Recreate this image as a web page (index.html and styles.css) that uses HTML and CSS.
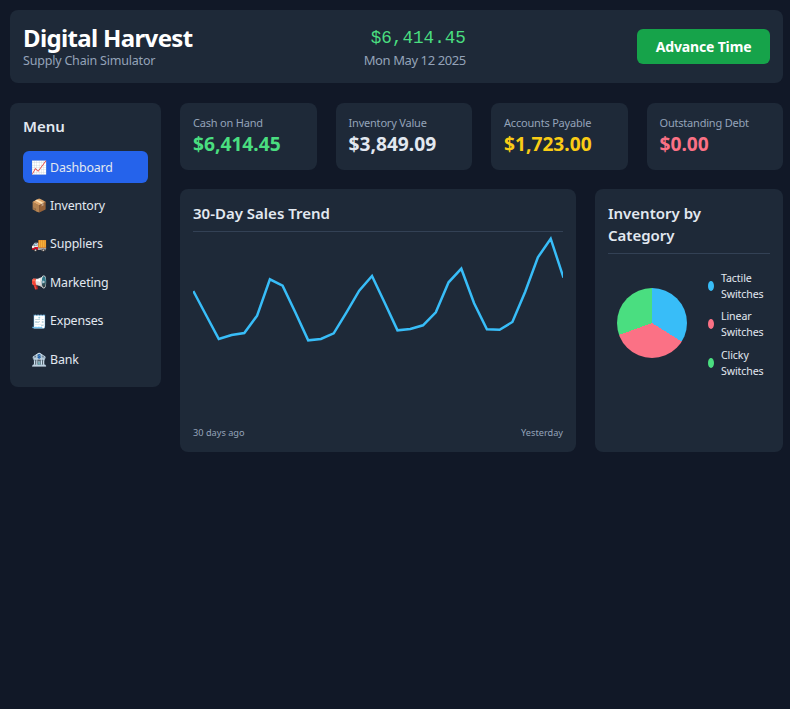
FILE: index.html
```html
<!DOCTYPE html>
<html lang="en">
<head>
  <meta charset="UTF-8" />
  <title>Digital Harvest</title>
  <link rel="stylesheet" href="styles.css">
</head>
<body>

<header class="topbar">
  <div class="brand">
    <h1>Digital Harvest</h1>
    <p>Supply Chain Simulator</p>
  </div>
  <div class="clock">
    <div class="clock-cash">$6,414.45</div>
    <div class="clock-date">Mon May 12 2025</div>
  </div>
  <button class="advance">Advance Time</button>
</header>

<div class="layout">
  <nav class="menu">
    <h2>Menu</h2>
    <a class="menu-item active" href="#"><span class="ico">📈</span>Dashboard</a>
    <a class="menu-item" href="#"><span class="ico">📦</span>Inventory</a>
    <a class="menu-item" href="#"><span class="ico">🚚</span>Suppliers</a>
    <a class="menu-item" href="#"><span class="ico">📢</span>Marketing</a>
    <a class="menu-item" href="#"><span class="ico">🧾</span>Expenses</a>
    <a class="menu-item" href="#"><span class="ico">🏦</span>Bank</a>
  </nav>

  <main class="content">
    <section class="stats">
      <div class="stat">
        <div class="stat-label">Cash on Hand</div>
        <div class="stat-value green">$6,414.45</div>
      </div>
      <div class="stat">
        <div class="stat-label">Inventory Value</div>
        <div class="stat-value">$3,849.09</div>
      </div>
      <div class="stat">
        <div class="stat-label">Accounts Payable</div>
        <div class="stat-value yellow">$1,723.00</div>
      </div>
      <div class="stat">
        <div class="stat-label">Outstanding Debt</div>
        <div class="stat-value red">$0.00</div>
      </div>
    </section>

    <section class="charts">
      <div class="panel">
        <h3>30-Day Sales Trend</h3>
        <svg class="trend" viewBox="193 232 370 196">
          <polyline points="193.3,291 206,315 218.8,339 231.6,335 244.3,333 257.1,315.7 269.9,279.3 282.6,285.7 295.4,312.5 308.2,340.3 320.9,339 333.7,333.3 346.5,312.3 359.2,290.7 372,276 384.8,303 397.5,330.3 410.3,329 423,325.3 435.8,312.3 448.6,282.3 461.3,268.7 474.1,303.3 486.9,329.3 499.6,329.7 512.4,322 525.2,291.7 537.9,257.3 550.7,238.7 563.5,277.7" />
        </svg>
        <div class="trend-axis">
          <span>30 days ago</span>
          <span>Yesterday</span>
        </div>
      </div>

      <div class="panel">
        <h3>Inventory by Category</h3>
        <div class="pie-row">
          <div class="pie"></div>
          <ul class="legend">
            <li><span class="dot blue"></span>Tactile Switches</li>
            <li><span class="dot pink"></span>Linear Switches</li>
            <li><span class="dot lime"></span>Clicky Switches</li>
          </ul>
        </div>
      </div>
    </section>
  </main>
</div>

</body>
</html>
```

FILE: styles.css
```css
html, body {
  margin: 0;
  padding: 0;
  height: 100%;
}

body {
  background: #111827;
  color: #e2e8f0;
  font-family: "Noto Sans", sans-serif;
  padding: 10px 7px 0 10px;
  box-sizing: border-box;
}

.topbar {
  display: flex;
  justify-content: space-between;
  align-items: center;
  height: 73px;
  padding: 0 13px;
  box-sizing: border-box;
  background: #1e2938;
  border-radius: 8px;
}

.brand h1 {
  margin: 0;
  font-size: 24px;
  line-height: 28px;
  font-weight: 700;
  letter-spacing: -0.65px;
  color: #fff;
}

.brand p {
  margin: 1px 0 0;
  font-size: 12.5px;
  line-height: 16px;
  letter-spacing: -0.2px;
  color: #94a3b8;
}

.clock {
  padding-top: 2px;
  text-align: right;
}

.clock-cash {
  font-family: "Liberation Mono", monospace;
  font-size: 17.6px;
  line-height: 24px;
  color: #4ade80;
}

.clock-date {
  font-size: 13px;
  line-height: 20px;
  letter-spacing: -0.4px;
  color: #94a3b8;
}

.advance {
  width: 133px;
  height: 35px;
  border: 0;
  border-radius: 6px;
  background: #16a34a;
  color: #fff;
  font-family: inherit;
  font-size: 14px;
  font-weight: 700;
  letter-spacing: -0.15px;
}

.layout {
  display: flex;
  align-items: flex-start;
  gap: 19px;
  margin-top: 20px;
}

.menu {
  width: 151px;
  flex: none;
  box-sizing: border-box;
  padding: 13px 13px 11.8px;
  background: #1e2938;
  border-radius: 8px;
}

.menu h2 {
  margin: 0 0 14.1px;
  font-size: 15px;
  line-height: 21px;
  font-weight: 600;
}

.menu-item {
  display: flex;
  align-items: center;
  height: 32px;
  margin-top: 6.4px;
  padding: 0 8px;
  border-radius: 6px;
  color: #e2e8f0;
  font-size: 12.4px;
  letter-spacing: -0.15px;
  text-decoration: none;
}

.menu-item.active {
  background: #2563eb;
}

.ico {
  width: 19px;
  font-size: 13px;
}

.content {
  flex: 1;
  min-width: 0;
}

.stats {
  display: grid;
  grid-template-columns: repeat(4, 1fr);
  gap: 19px;
}

.stat {
  height: 67px;
  box-sizing: border-box;
  padding: 12px 13px;
  background: #1e2938;
  border-radius: 8px;
}

.stat-label {
  font-size: 11px;
  line-height: 16px;
  letter-spacing: -0.2px;
  color: #94a3b8;
}

.stat-value {
  font-size: 19.2px;
  line-height: 26px;
  font-weight: 700;
}

.green { color: #4ade80; }
.yellow { color: #facc15; }
.red { color: #fb7185; }

.charts {
  display: grid;
  grid-template-columns: 1fr 188px;
  gap: 19px;
  margin-top: 19px;
}

.panel {
  height: 263px;
  box-sizing: border-box;
  padding: 13px;
  background: #1e2938;
  border-radius: 8px;
}

.panel h3 {
  margin: 0;
  padding-bottom: 7px;
  border-bottom: 1px solid #334155;
  font-size: 15px;
  line-height: 22px;
  font-weight: 600;
}

.trend {
  display: block;
  width: 370px;
  height: 196px;
  margin-bottom: -1px;
}

.trend polyline {
  fill: none;
  stroke: #38bdf8;
  stroke-width: 2.5;
}

.trend-axis {
  display: flex;
  justify-content: space-between;
  font-size: 9.2px;
  line-height: 12px;
  color: #94a3b8;
}

.pie-row {
  display: flex;
  align-items: center;
  gap: 21px;
  margin-top: 14px;
  padding-left: 9px;
}

.pie {
  width: 70px;
  height: 70px;
  flex: none;
  border-radius: 50%;
  background: conic-gradient(#38bdf8 0 122deg, #fb7185 122deg 250deg, #4ade80 250deg 360deg);
}

.legend {
  display: flex;
  flex-direction: column;
  gap: 6.4px;
  margin: 0;
  padding: 2px 0 0;
  list-style: none;
  font-size: 10.6px;
  line-height: 16px;
  letter-spacing: -0.1px;
}

.legend li {
  display: flex;
  align-items: center;
  gap: 7px;
}

.dot {
  width: 6px;
  height: 10px;
  flex: none;
  border-radius: 50%;
}

.dot.blue { background: #38bdf8; }
.dot.pink { background: #fb7185; }
.dot.lime { background: #4ade80; }
```
